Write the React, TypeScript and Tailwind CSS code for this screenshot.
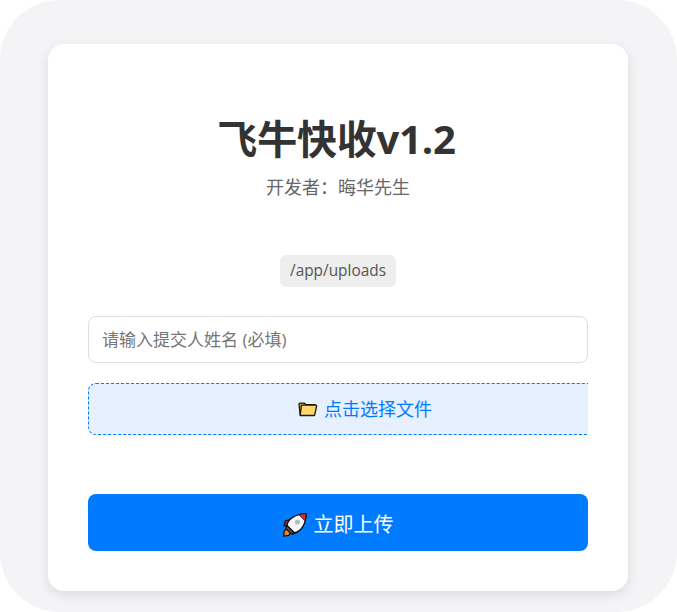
export default function App() {
  const font = { fontFamily: '"Open Sans", "Noto Sans CJK SC", sans-serif' };
  return (
    <div className="w-[677px] h-[612px] bg-white overflow-hidden" style={font}>
      <div className="w-full h-full bg-[#f4f4f7] rounded-[60px] pt-[44px] pl-[48px]">
        <div className="w-[580px] h-[547px] bg-white rounded-2xl shadow-[0_4px_12px_rgba(0,0,0,0.1)] px-10 pt-[68px] flex flex-col">
          <h1 className="text-center text-[40px] leading-[54px] font-bold text-[#333333] tracking-[-0.2px] pr-[3px]">飞牛快收v1.2</h1>
          <p className="text-center text-lg leading-[24px] text-[#666666] mt-[9px]">开发者：晦华先生</p>
          <div className="flex justify-center mt-[56px]">
            <span className="bg-[#eeeeee] rounded-md px-2.5 h-[32px] flex items-center text-[15.4px] text-[#555555]">/app/uploads</span>
          </div>
          <input
            placeholder="请输入提交人姓名 (必填)"
            className="mt-[29px] w-[500px] h-[47px] border border-[#dddddd] rounded-lg px-[13px] text-[17px] text-[#333333] placeholder:text-[#757575] outline-none shrink-0"
          />
          <div className="mt-5 w-[500px] overflow-hidden shrink-0">
            <label className="w-[554px] h-[52px] bg-[#e6f0ff] border border-dashed border-[#007bff] rounded-lg flex items-center justify-center text-[18px] text-[#007bff]">
              <svg width="20" height="16" viewBox="0 0 20 16" className="mr-[6px]">
                <path d="M2.2 14.5 1 3.2c0-.6.4-1 1-1h4.5l1.5 1.5h8.5c.6 0 1 .4 1 1v1" fill="#d9a93f" stroke="#1a1a1a" strokeWidth="1.3" strokeLinejoin="round" />
                <path d="M2.2 14.5h13.6c.5 0 .8-.3.9-.7L18.6 5c.1-.5-.2-.8-.7-.8H4.2c-.5 0-.8.3-.9.7L2.2 14.5Z" fill="#ffd56e" stroke="#1a1a1a" strokeWidth="1.3" strokeLinejoin="round" />
              </svg>
              点击选择文件
            </label>
          </div>
          <button className="mt-[59px] w-[500px] h-[57px] bg-[#007bff] rounded-lg flex items-center justify-center text-white text-[20px] pt-1 shrink-0">
            <svg width="24" height="24" viewBox="0 0 24 24" className="mr-[7px]">
              <path d="M4 16 1.2 18l-.6 5.2 5.2-.8L8 19Z" fill="#f58220" stroke="#111" strokeWidth="1.3" strokeLinejoin="round" />
              <path d="M8 6 2.5 8 1 12.5l5 .2ZM16 14l-2 5.5-4.5 1.8-.2-5Z" fill="#d9322e" stroke="#111" strokeWidth="1.3" strokeLinejoin="round" />
              <path d="M3.8 12.5C5 6 12.5.8 23.2.6 23 11.5 18 18.8 11.2 19.8Z" fill="#f8fafc" stroke="#111" strokeWidth="1.4" strokeLinejoin="round" />
              <path d="M16 1.6c2.2-.7 5-1 7.2-1-.1 2.2-.4 5-1.1 7.2Z" fill="#dc2a35" stroke="#111" strokeWidth="1" strokeLinejoin="round" />
              <circle cx="14.5" cy="9" r="2.6" fill="#b4bcc4" />
              <path d="M3.8 12.5 11.2 19.8l-3 1-5.5-5.5Z" fill="#555" stroke="#111" strokeWidth="1.2" strokeLinejoin="round" />
            </svg>
            立即上传
          </button>
        </div>
      </div>
    </div>
  );
}
